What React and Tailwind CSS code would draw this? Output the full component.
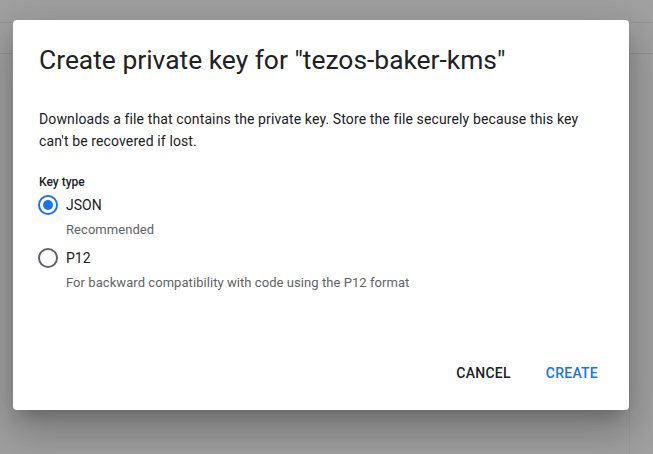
import { useState } from "react";

function Radio({ checked }) {
  return (
    <span
      className={`flex items-center justify-center w-5 h-5 rounded-full border-2 ${
        checked ? "border-[#1a73e8]" : "border-[#5f6368]"
      }`}
    >
      {checked && <span className="w-2.5 h-2.5 rounded-full bg-[#1a73e8]" />}
    </span>
  );
}

export default function App() {
  const [keyType, setKeyType] = useState("json");

  const options = [
    { id: "json", label: "JSON", hint: "Recommended" },
    {
      id: "p12",
      label: "P12",
      hint: "For backward compatibility with code using the P12 format",
    },
  ];

  return (
    <div
      className="relative w-[653px] h-[454px] overflow-hidden bg-[#a1a1a1]"
      style={{ fontFamily: "Roboto, 'Noto Sans', Arial, sans-serif" }}
    >
      {/* page behind the backdrop */}
      <div className="absolute inset-x-0 top-[22px] h-px bg-[#949494]" />
      <div className="absolute left-0 top-[53px] w-full h-px bg-[#949494]" />
      <div className="absolute left-[629px] top-[22px] bottom-0 w-px bg-[#999]" />

      <div className="relative pt-[20px] pl-[13px]">
        <div className="w-[616px] h-[390px] bg-white rounded flex flex-col shadow-[0_11px_15px_-7px_rgba(0,0,0,0.2),0_24px_38px_3px_rgba(0,0,0,0.14),0_9px_46px_8px_rgba(0,0,0,0.12)]">
          <div className="px-[26px] pt-[24px]">
            <h1 className="text-[26.4px] leading-8 text-[#202124]">
              Create private key for "tezos-baker-kms"
            </h1>
            <p className="mt-[32px] text-[14px] leading-[22px] tracking-[0.12px] text-[#202124] pr-4">
              Downloads a file that contains the private key. Store the file
              securely because this key can't be recovered if lost.
            </p>
            <div className="mt-[22px] text-[12px] leading-4 font-medium text-[#202124]">
              Key type
            </div>
            <div className="mt-[4px] flex flex-col">
              {options.map((o) => (
                <div key={o.id} className="mb-[9px]">
                  <button
                    onClick={() => setKeyType(o.id)}
                    className="flex items-center gap-[8px] h-[22px]"
                  >
                    <span className="-ml-px">
                      <Radio checked={keyType === o.id} />
                    </span>
                    <span className="text-[14px] text-[#202124]">{o.label}</span>
                  </button>
                  <div className="pl-[27px] mt-[6px] text-[13px] leading-4 tracking-[0.06px] text-[#5f6368]">
                    {o.hint}
                  </div>
                </div>
              ))}
            </div>
          </div>
          <div className="mt-auto flex justify-end gap-[19px] pr-[23px] pb-[19px]">
            <button className="h-9 px-2 text-[14px] font-medium tracking-[0.25px] text-[#202124]">
              CANCEL
            </button>
            <button className="h-9 px-2 text-[14px] font-medium tracking-[0.25px] text-[#1a73e8]">
              CREATE
            </button>
          </div>
        </div>
      </div>
    </div>
  );
}
